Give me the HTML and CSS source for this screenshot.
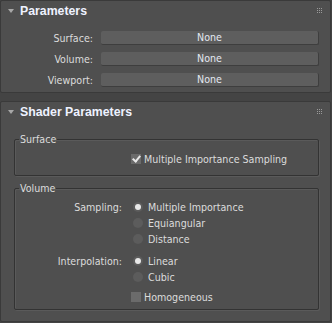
FILE: index.html
```html
<!DOCTYPE html>
<html>
<head>
<meta charset="utf-8">
<link rel="stylesheet" href="styles.css">
</head>
<body>
<div class="rollout r1">
  <div class="head">
    <span class="tri"></span>
    <span class="title">Parameters</span>
    <span class="grip"><i></i><i></i><i></i><i></i><i></i><i></i><i></i><i></i><i></i></span>
  </div>
  <div class="params">
    <div class="prow"><span class="plabel">Surface:</span><span class="field">None</span></div>
    <div class="prow"><span class="plabel">Volume:</span><span class="field">None</span></div>
    <div class="prow"><span class="plabel">Viewport:</span><span class="field">None</span></div>
  </div>
</div>
<div class="rollout r2">
  <div class="head">
    <span class="tri"></span>
    <span class="title">Shader Parameters</span>
    <span class="grip"><i></i><i></i><i></i><i></i><i></i><i></i><i></i><i></i><i></i></span>
  </div>
  <fieldset class="group g-surface">
    <legend>Surface</legend>
    <div class="crow"><span class="check on"></span><span class="ctext">Multiple Importance Sampling</span></div>
  </fieldset>
  <fieldset class="group g-volume">
    <legend>Volume</legend>
    <div class="rgrid">
      <span class="rlabel">Sampling:</span>
      <div class="ritems">
        <div class="ritem"><span class="radio on"></span><span class="ctext">Multiple Importance</span></div>
        <div class="ritem"><span class="radio"></span><span class="ctext">Equiangular</span></div>
        <div class="ritem"><span class="radio"></span><span class="ctext">Distance</span></div>
      </div>
    </div>
    <div class="rgrid interp">
      <span class="rlabel">Interpolation:</span>
      <div class="ritems">
        <div class="ritem"><span class="radio on"></span><span class="ctext">Linear</span></div>
        <div class="ritem"><span class="radio"></span><span class="ctext">Cubic</span></div>
      </div>
    </div>
    <div class="crow homo"><span class="check"></span><span class="ctext">Homogeneous</span></div>
  </fieldset>
</div>
</body>
</html>
```

FILE: styles.css
```css
html, body {
  margin: 0;
  padding: 0;
}
body {
  width: 332px;
  height: 323px;
  background: #444444;
  font-family: "DejaVu Sans Condensed", "DejaVu Sans", sans-serif;
  font-size: 10.6px;
  color: #dcdcdc;
  overflow: hidden;
}
.rollout {
  box-sizing: border-box;
  width: 331px;
  background: #4f4f4f;
  border: 1px solid #3a3a3a;
  border-radius: 2px;
  position: relative;
}
.r1 {
  height: 93px;
}
.r2 {
  margin-top: 8px;
  height: 221px;
}
.head {
  height: 20px;
  display: flex;
  align-items: center;
  position: relative;
}
.tri {
  width: 0;
  height: 0;
  border-left: 3px solid transparent;
  border-right: 3px solid transparent;
  border-top: 4px solid #a8a8a8;
  margin-left: 7px;
  margin-right: 6px;
}
.title {
  font-family: "Liberation Sans", Arial, sans-serif;
  font-weight: bold;
  font-size: 12.3px;
  color: #eef2ff;
}
.grip {
  position: absolute;
  right: 7px;
  top: 7px;
  width: 6px;
  height: 6px;
  display: grid;
  grid-template-columns: repeat(3, 1px);
  grid-template-rows: repeat(3, 1px);
  gap: 1px;
}
.grip i {
  background: #9a9a9a;
}
.params {
  padding-top: 10px;
  display: flex;
  flex-direction: column;
  gap: 7px;
}
.prow {
  display: flex;
  align-items: center;
  height: 14px;
}
.plabel {
  width: 92px;
  text-align: right;
  box-sizing: border-box;
}
.field {
  margin-left: 8px;
  width: 218px;
  height: 14px;
  box-sizing: border-box;
  background: #5e5e5e;
  border-radius: 2px;
  border-right: 1px solid #3e3e3e;
  border-bottom: 1px solid #3e3e3e;
  text-align: center;
  line-height: 13px;
  color: #e4e8f0;
}
.group {
  box-sizing: border-box;
  margin: 0 0 0 13px;
  width: 305px;
  padding: 0;
  border: 1px solid #333333;
  box-shadow: 1px 1px 0 #5a5a5a, inset 1px 1px 0 #5a5a5a;
  border-radius: 2px;
  min-width: 0;
}
.group legend {
  padding: 0 1px;
  margin-left: 4px;
  line-height: 13px;
}
.g-surface {
  margin-top: 11px;
  height: 43px;
}
.g-volume {
  margin-top: 6px;
  height: 128px;
}
.crow {
  display: flex;
  align-items: center;
  padding-left: 116px;
  height: 12px;
  margin-top: 7px;
}
.check {
  width: 10px;
  height: 10px;
  background: #6b6b6b;
  margin-right: 3px;
  position: relative;
}
.check.on::after {
  content: "";
  position: absolute;
  left: 3px;
  top: 0px;
  width: 3px;
  height: 6px;
  border-right: 2px solid #e8e8e8;
  border-bottom: 2px solid #e8e8e8;
  transform: rotate(40deg);
}
.rgrid {
  display: flex;
  margin-top: 4px;
}
.rgrid.interp {
  margin-top: 6px;
}
.rlabel {
  width: 107px;
  text-align: right;
  line-height: 16px;
}
.ritems {
  display: flex;
  flex-direction: column;
  margin-left: 11px;
}
.ritem {
  display: flex;
  align-items: center;
  height: 16px;
}
.radio {
  width: 10px;
  height: 10px;
  border-radius: 50%;
  background: #5c5c5c;
  margin-right: 5px;
  position: relative;
}
.radio.on::after {
  content: "";
  position: absolute;
  left: 2px;
  top: 2px;
  width: 6px;
  height: 6px;
  border-radius: 50%;
  background: #e8e8e8;
}
.homo {
  margin-top: 6px;
}
```
